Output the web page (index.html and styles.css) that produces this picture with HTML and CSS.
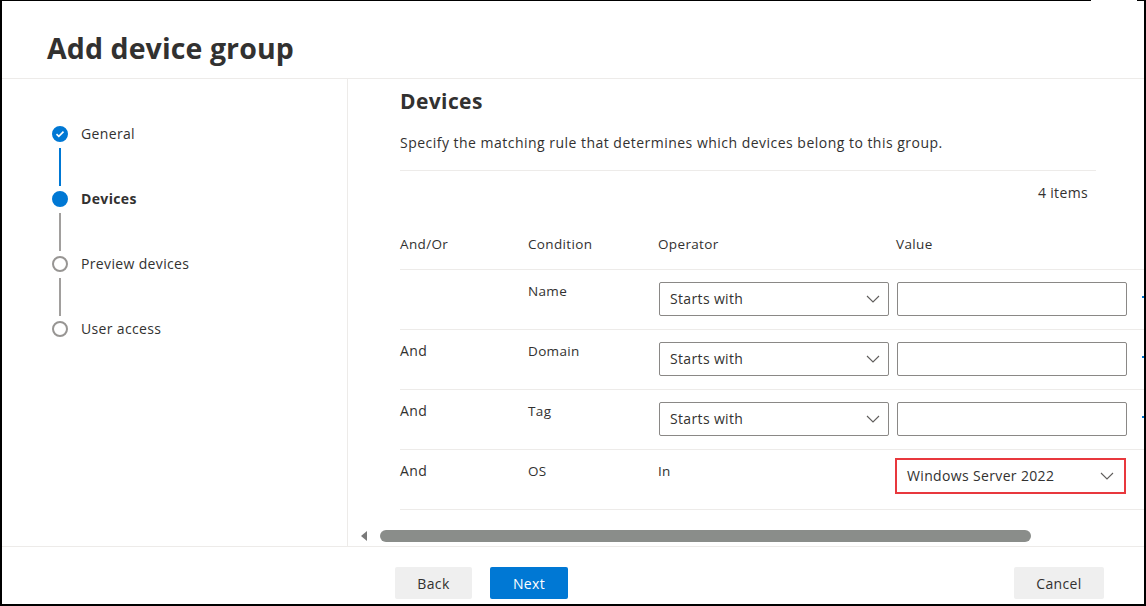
FILE: index.html
```html
<!DOCTYPE html>
<html lang="en">
<head>
<meta charset="utf-8">
<title>Add device group</title>
<link rel="stylesheet" href="styles.css">
</head>
<body>
<div class="frame">
  <div class="topline"><span class="seg-a"></span><span class="seg-b"></span></div>
  <header class="header"><h1 class="title">Add device group</h1></header>
  <div class="main">
    <nav class="steps">
      <div class="step done">
        <div class="marker">
          <span class="dot"><svg width="10" height="8" viewBox="0 0 10 8"><polyline points="1.5,4.2 3.8,6.3 8.5,1.6" fill="none" stroke="#fff" stroke-width="1.6"/></svg></span>
          <span class="link blue"></span>
        </div>
        <span class="label">General</span>
      </div>
      <div class="step current">
        <div class="marker">
          <span class="dot"></span>
          <span class="link"></span>
        </div>
        <span class="label">Devices</span>
      </div>
      <div class="step">
        <div class="marker">
          <span class="dot"></span>
          <span class="link"></span>
        </div>
        <span class="label">Preview devices</span>
      </div>
      <div class="step">
        <div class="marker">
          <span class="dot"></span>
        </div>
        <span class="label">User access</span>
      </div>
    </nav>
    <section class="content">
      <div class="intro">
        <h2 class="heading">Devices</h2>
        <p class="desc">Specify the matching rule that determines which devices belong to this group.</p>
      </div>
      <div class="count">4 items</div>
      <div class="table">
        <div class="row head">
          <span class="cell">And/Or</span>
          <span class="cell">Condition</span>
          <span class="cell">Operator</span>
          <span class="cell">Value</span>
          <span class="cell"></span>
        </div>
        <div class="row">
          <span class="cell"></span>
          <span class="cell small">Name</span>
          <span class="cell"><span class="select">Starts with<svg class="chev" width="14" height="8" viewBox="0 0 14 8"><polyline points="1,1 7,7 13,1" fill="none" stroke="#605e5c" stroke-width="1.1"/></svg></span></span>
          <span class="cell"><span class="input"></span></span>
          <span class="cell"><span class="act"></span></span>
        </div>
        <div class="row">
          <span class="cell">And</span>
          <span class="cell small">Domain</span>
          <span class="cell"><span class="select">Starts with<svg class="chev" width="14" height="8" viewBox="0 0 14 8"><polyline points="1,1 7,7 13,1" fill="none" stroke="#605e5c" stroke-width="1.1"/></svg></span></span>
          <span class="cell"><span class="input"></span></span>
          <span class="cell"><span class="act"></span></span>
        </div>
        <div class="row">
          <span class="cell">And</span>
          <span class="cell small">Tag</span>
          <span class="cell"><span class="select">Starts with<svg class="chev" width="14" height="8" viewBox="0 0 14 8"><polyline points="1,1 7,7 13,1" fill="none" stroke="#605e5c" stroke-width="1.1"/></svg></span></span>
          <span class="cell"><span class="input"></span></span>
          <span class="cell"><span class="act"></span></span>
        </div>
        <div class="row">
          <span class="cell">And</span>
          <span class="cell small">OS</span>
          <span class="cell small">In</span>
          <span class="cell"><span class="select highlight">Windows Server 2022<svg class="chev" width="14" height="8" viewBox="0 0 14 8"><polyline points="1,1 7,7 13,1" fill="none" stroke="#605e5c" stroke-width="1.1"/></svg></span></span>
          <span class="cell"></span>
        </div>
      </div>
      <div class="hscroll">
        <span class="arrow left"></span>
        <span class="track"><span class="thumb"></span></span>
        <span class="arrow right"></span>
      </div>
    </section>
  </div>
  <footer class="footer">
    <button class="btn">Back</button>
    <button class="btn primary">Next</button>
    <span class="spacer"></span>
    <button class="btn cancel">Cancel</button>
  </footer>
</div>
</body>
</html>
```
FILE: styles.css
```css
* { box-sizing: border-box; }
html, body { margin: 0; padding: 0; background: #fff; }
body {
  font-family: "Open Sans", "Liberation Sans", sans-serif;
  color: #323130;
  letter-spacing: 0.35px;
}
.frame {
  width: 1146px;
  height: 606px;
  border-left: 2px solid #000;
  border-right: 2px solid #000;
  border-bottom: 2px solid #000;
  overflow: hidden;
  display: flex;
  flex-direction: column;
}
.topline {
  height: 1px;
  display: flex;
  justify-content: space-between;
  flex: none;
}
.seg-a { width: 1089px; background: #000; }
.seg-b { width: 7px; background: #000; }
.header {
  height: 78px;
  flex: none;
  border-bottom: 1px solid #edebe9;
  padding-left: 45px;
}
.title {
  margin: 0;
  padding-top: 29px;
  font-size: 28.5px;
  line-height: 36px;
  font-weight: 700;
  letter-spacing: 0.1px;
  color: #323130;
}
.main {
  height: 467px;
  flex: none;
  display: flex;
  overflow: hidden;
}
.steps {
  width: 346px;
  flex: none;
  border-right: 1px solid #edebe9;
  padding: 47px 0 0 50px;
}
.step {
  display: flex;
  align-items: flex-start;
  gap: 13px;
  height: 65px;
}
.marker {
  width: 16px;
  display: flex;
  flex-direction: column;
  align-items: center;
}
.dot {
  width: 16px;
  height: 16px;
  border-radius: 50%;
  border: 2px solid #979593;
  background: #fff;
  display: flex;
  align-items: center;
  justify-content: center;
}
.done .dot, .current .dot {
  background: #0078d4;
  border-color: #0078d4;
}
.link {
  width: 2px;
  height: 38px;
  margin-top: 6px;
  background: #a19f9d;
}
.link.blue { background: #0078d4; }
.label {
  font-size: 14px;
  line-height: 18px;
  margin-top: -1px;
}
.current .label { font-weight: 700; }
.content {
  flex: 1;
  min-width: 0;
  overflow: hidden;
  padding-left: 52px;
  position: relative;
}
.intro {
  width: 696px;
  border-bottom: 1px solid #edebe9;
  padding: 9px 0 17px;
}
.heading {
  margin: 0;
  font-size: 21px;
  line-height: 26px;
  font-weight: 700;
  letter-spacing: 0.4px;
}
.desc {
  margin: 19px 0 0;
  font-size: 14px;
  line-height: 20px;
  letter-spacing: 0.48px;
}
.count {
  width: 696px;
  text-align: right;
  padding-right: 8px;
  margin-top: 12px;
  font-size: 14px;
  line-height: 20px;
}
.table { width: 800px; }
.row {
  display: grid;
  grid-template-columns: 128px 130px 238px 246px 58px;
  height: 60px;
  border-bottom: 1px solid #edebe9;
}
.row.head {
  height: 67px;
  align-items: end;
  padding-bottom: 15px;
}
.cell {
  font-size: 14px;
  line-height: 20px;
  padding-top: 11px;
}
.head .cell { padding-top: 0; font-size: 13.5px; }
.cell.small { font-size: 13.5px; }
.select {
  margin-top: 1px;
  width: 230px;
  height: 34px;
  margin-left: 1px;
  border: 1px solid #8a8886;
  border-radius: 2px;
  display: flex;
  align-items: center;
  justify-content: space-between;
  padding: 0 8px 0 10px;
  font-size: 14px;
  color: #323130;
}
.select.highlight {
  margin-top: -3px;
  margin-left: -1px;
  width: 231px;
  height: 36px;
  border: 2px solid #e8383d;
  border-radius: 0;
  padding: 0 10px 0 10px;
}
.input {
  display: block;
  margin-top: 1px;
  margin-left: 1px;
  width: 230px;
  height: 34px;
  border: 1px solid #8a8886;
  border-radius: 2px;
}
.act {
  display: block;
  width: 10px;
  height: 2px;
  margin-top: 15px;
  background: #0078d4;
}
.hscroll {
  position: absolute;
  left: 0;
  right: 0;
  top: 451px;
  height: 12px;
  display: flex;
  align-items: center;
  padding-left: 13px;
}
.arrow {
  width: 0;
  height: 0;
  border-top: 5px solid transparent;
  border-bottom: 5px solid transparent;
}
.arrow.left { border-right: 6px solid #7a7a7a; }
.arrow.right { border-left: 6px solid #7a7a7a; margin-left: 13px; }
.track {
  flex: none;
  width: 754px;
  margin-left: 13px;
  height: 12px;
}
.thumb {
  display: block;
  width: 651px;
  height: 12px;
  border-radius: 6px;
  background: #8a8d8a;
}
.footer {
  flex: 1;
  border-top: 1px solid #edebe9;
  display: flex;
  align-items: flex-start;
  padding: 20px 40px 0 393px;
  gap: 18px;
}
.btn {
  height: 32px;
  width: 77px;
  border: none;
  border-radius: 2px;
  background: #efefef;
  font-family: inherit;
  letter-spacing: 0.35px;
  font-size: 14px;
  color: #323130;
  padding: 0;
}
.btn.primary { background: #0078d4; color: #fff; width: 78px; }
.btn.cancel { width: 90px; }
.spacer { flex: 1; }
```
